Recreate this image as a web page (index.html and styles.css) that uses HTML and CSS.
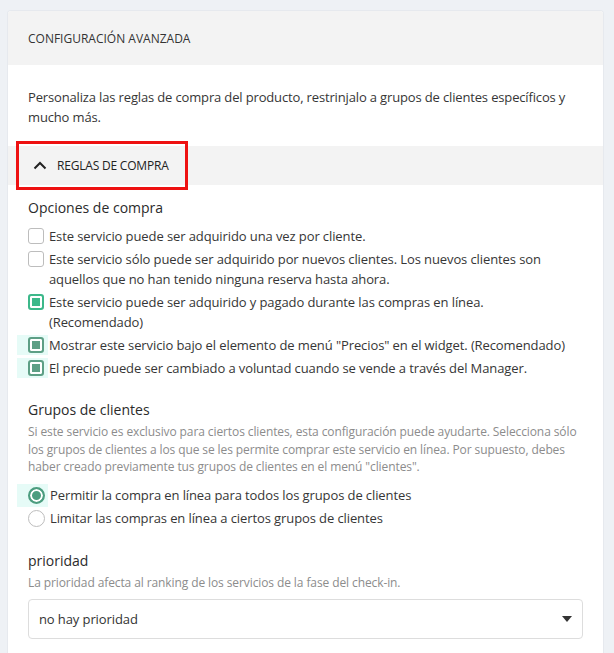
FILE: index.html
```html
<!DOCTYPE html>
<html lang="es">
<head>
<meta charset="utf-8">
<link rel="stylesheet" href="styles.css">
</head>
<body>
<div class="card">
  <div class="card-header">CONFIGURACIÓN AVANZADA</div>
  <div class="card-body">
    <p class="intro">Personaliza las reglas de compra del producto, restrinjalo a grupos de clientes específicos y mucho más.</p>
    <div class="section-bar">
      <svg class="chev" width="14" height="9" viewBox="0 0 14 9"><path d="M1.5 7.5 L7 2 L12.5 7.5" fill="none" stroke="#222" stroke-width="2"/></svg>
      <span>REGLAS DE COMPRA</span>
      <div class="highlight"></div>
    </div>
    <h3 class="group-title">Opciones de compra</h3>
    <ul class="options">
      <li><span class="box"></span><span>Este servicio puede ser adquirido una vez por cliente.</span></li>
      <li><span class="box"></span><span>Este servicio sólo puede ser adquirido por nuevos clientes. Los nuevos clientes son aquellos que no han tenido ninguna reserva hasta ahora.</span></li>
      <li><span class="box checked"></span><span>Este servicio puede ser adquirido y pagado durante las compras en línea. (Recomendado)</span></li>
      <li class="focus"><span class="box checked dim"></span><span>Mostrar este servicio bajo el elemento de menú "Precios" en el widget. (Recomendado)</span></li>
      <li class="focus"><span class="box checked dim"></span><span>El precio puede ser cambiado a voluntad cuando se vende a través del Manager.</span></li>
    </ul>
    <h3 class="group-title second">Grupos de clientes</h3>
    <p class="help">Si este servicio es exclusivo para ciertos clientes, esta configuración puede ayudarte. Selecciona sólo los grupos de clientes a los que se les permite comprar este servicio en línea. Por supuesto, debes haber creado previamente tus grupos de clientes en el menú "clientes".</p>
    <ul class="radios">
      <li class="focus"><span class="radio on"></span><span>Permitir la compra en línea para todos los grupos de clientes</span></li>
      <li><span class="radio"></span><span>Limitar las compras en línea a ciertos grupos de clientes</span></li>
    </ul>
    <h3 class="group-title third">prioridad</h3>
    <p class="help">La prioridad afecta al ranking de los servicios de la fase del check-in.</p>
    <div class="select">
      <span>no hay prioridad</span>
      <svg width="10" height="6" viewBox="0 0 10 6"><path d="M0 0 H10 L5 6 Z" fill="#333"/></svg>
    </div>
  </div>
</div>
</body>
</html>
```
FILE: styles.css
```css
* { box-sizing: border-box; }
html, body { margin: 0; padding: 0; }
body {
  background: #eef1f5;
  font-family: "Open Sans", "Noto Sans", sans-serif;
  color: #363636;
  padding: 11px 11px 0 8px;
  height: 653px;
  overflow: hidden;
}
.card {
  background: #fff;
  border-radius: 3px;
  box-shadow: 0 0 0 1px #e6e9ee;
}
.card-header {
  background: #f3f3f3;
  height: 54px;
  display: flex;
  align-items: center;
  padding-left: 20px;
  font-size: 12px;
  color: #333;
  border-radius: 3px 3px 0 0;
}
.card-body {
  padding: 22px 20px 20px 20px;
}
.intro {
  margin: 0;
  font-size: 13px;
  letter-spacing: -0.15px;
  line-height: 20px;
}
.section-bar {
  position: relative;
  margin: 19px -20px 0 -20px;
  height: 39px;
  background: #f3f3f3;
  display: flex;
  align-items: center;
  padding-left: 25px;
  font-size: 12px;
  letter-spacing: -0.2px;
  color: #222;
}
.chev { margin-right: 10px; }
.highlight {
  position: absolute;
  left: 8px;
  top: -5px;
  width: 172px;
  height: 49px;
  border: 3px solid #ee1111;
}
.group-title {
  margin: 12px 0 0 0;
  font-size: 14px;
  font-weight: 500;
  line-height: 22px;
  color: #2b2b2b;
}
.group-title.second { margin-top: 21px; }
.group-title.third { margin-top: 20px; }
.options, .radios {
  list-style: none;
  margin: 0;
  padding: 0;
}
.options { margin-top: 7px; padding-right: 8px; }
.options li, .radios li {
  display: flex;
  align-items: flex-start;
  font-size: 13px;
  letter-spacing: -0.1px;
  line-height: 20px;
  margin-bottom: 3px;
  position: relative;
}
.box {
  flex: none;
  width: 16px;
  height: 16px;
  border: 1.5px solid #bdbdbd;
  border-radius: 3px;
  margin: 2px 5px 0 0;
  background: #fff;
}
.box.checked {
  border: 2px solid #3cb88a;
  box-shadow: inset 0 0 0 2px #fff;
  background: #3cb88a;
}
.box.dim {
  border-color: #5d9f85;
  background: #5d9f85;
}
.focus::before {
  content: "";
  position: absolute;
  left: -11px;
  top: 0;
  width: 31px;
  height: 20px;
  background: #e6fbf7;
  z-index: 0;
}
.focus > span { position: relative; z-index: 1; }
.help {
  margin: 2px 0 0 0;
  font-size: 12px;
  letter-spacing: -0.1px;
  line-height: 17.5px;
  color: #8c8c8c;
}
.radios { margin-top: 8px; }
.radios li { line-height: 23px; margin-bottom: 0; }
.radio {
  flex: none;
  width: 17px;
  height: 17px;
  border: 1.5px solid #bdbdbd;
  border-radius: 50%;
  margin: 3px 5px 0 0;
  background: #fff;
}
.radio.on {
  border: 2px solid #4c9d7f;
  box-shadow: inset 0 0 0 2px #fff;
  background: #4c9d7f;
}
.radios .focus::before { height: 23px; }
.select {
  margin-top: 8px;
  height: 40px;
  border: 1px solid #dddddd;
  border-radius: 4px;
  display: flex;
  align-items: center;
  justify-content: space-between;
  padding: 0 10px 0 10px;
  font-size: 13px;
  letter-spacing: -0.1px;
  color: #333;
}
```
